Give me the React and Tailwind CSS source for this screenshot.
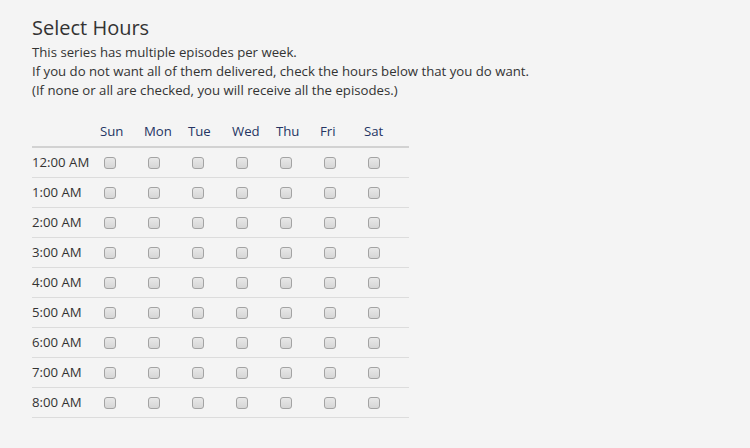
const days = ["Sun", "Mon", "Tue", "Wed", "Thu", "Fri", "Sat"];
const hours = [
  "12:00 AM",
  "1:00 AM",
  "2:00 AM",
  "3:00 AM",
  "4:00 AM",
  "5:00 AM",
  "6:00 AM",
  "7:00 AM",
  "8:00 AM",
];

const Box = () => (
  <span className="ml-1 block w-3 h-3 rounded-[3px] border border-[#a3a3a3] bg-gradient-to-b from-[#e8e8e8] to-[#d6d6d6]" />
);

const App = () => {
  return (
    <div
      className="min-h-[448px] w-[750px] bg-[#f4f4f4] text-[#333] px-8 pt-[14px]"
      style={{ fontFamily: '"Open Sans", sans-serif' }}
    >
      <h1 className="text-[20px] leading-[28px]">Select Hours</h1>
      <div className="text-[13.2px] leading-[19px] mt-[1px]">
        <p>This series has multiple episodes per week.</p>
        <p>
          If you do not want all of them delivered, check the hours below that
          you do want.
        </p>
        <p>(If none or all are checked, you will receive all the episodes.)</p>
      </div>

      <div className="mt-[18px] w-[377px] text-[13.2px]">
        <div className="grid grid-cols-[68px_repeat(7,44px)] h-[30px] items-center border-b-2 border-[#d2d2d2] text-[#253463]">
          <span />
          {days.map((d) => (
            <span key={d}>{d}</span>
          ))}
        </div>
        {hours.map((h) => (
          <div
            key={h}
            className="grid grid-cols-[68px_repeat(7,44px)] h-[30px] items-center border-b border-[#dcdcdc]"
          >
            <span>{h}</span>
            {days.map((d) => (
              <Box key={d} />
            ))}
          </div>
        ))}
      </div>
    </div>
  );
};

export default App;
